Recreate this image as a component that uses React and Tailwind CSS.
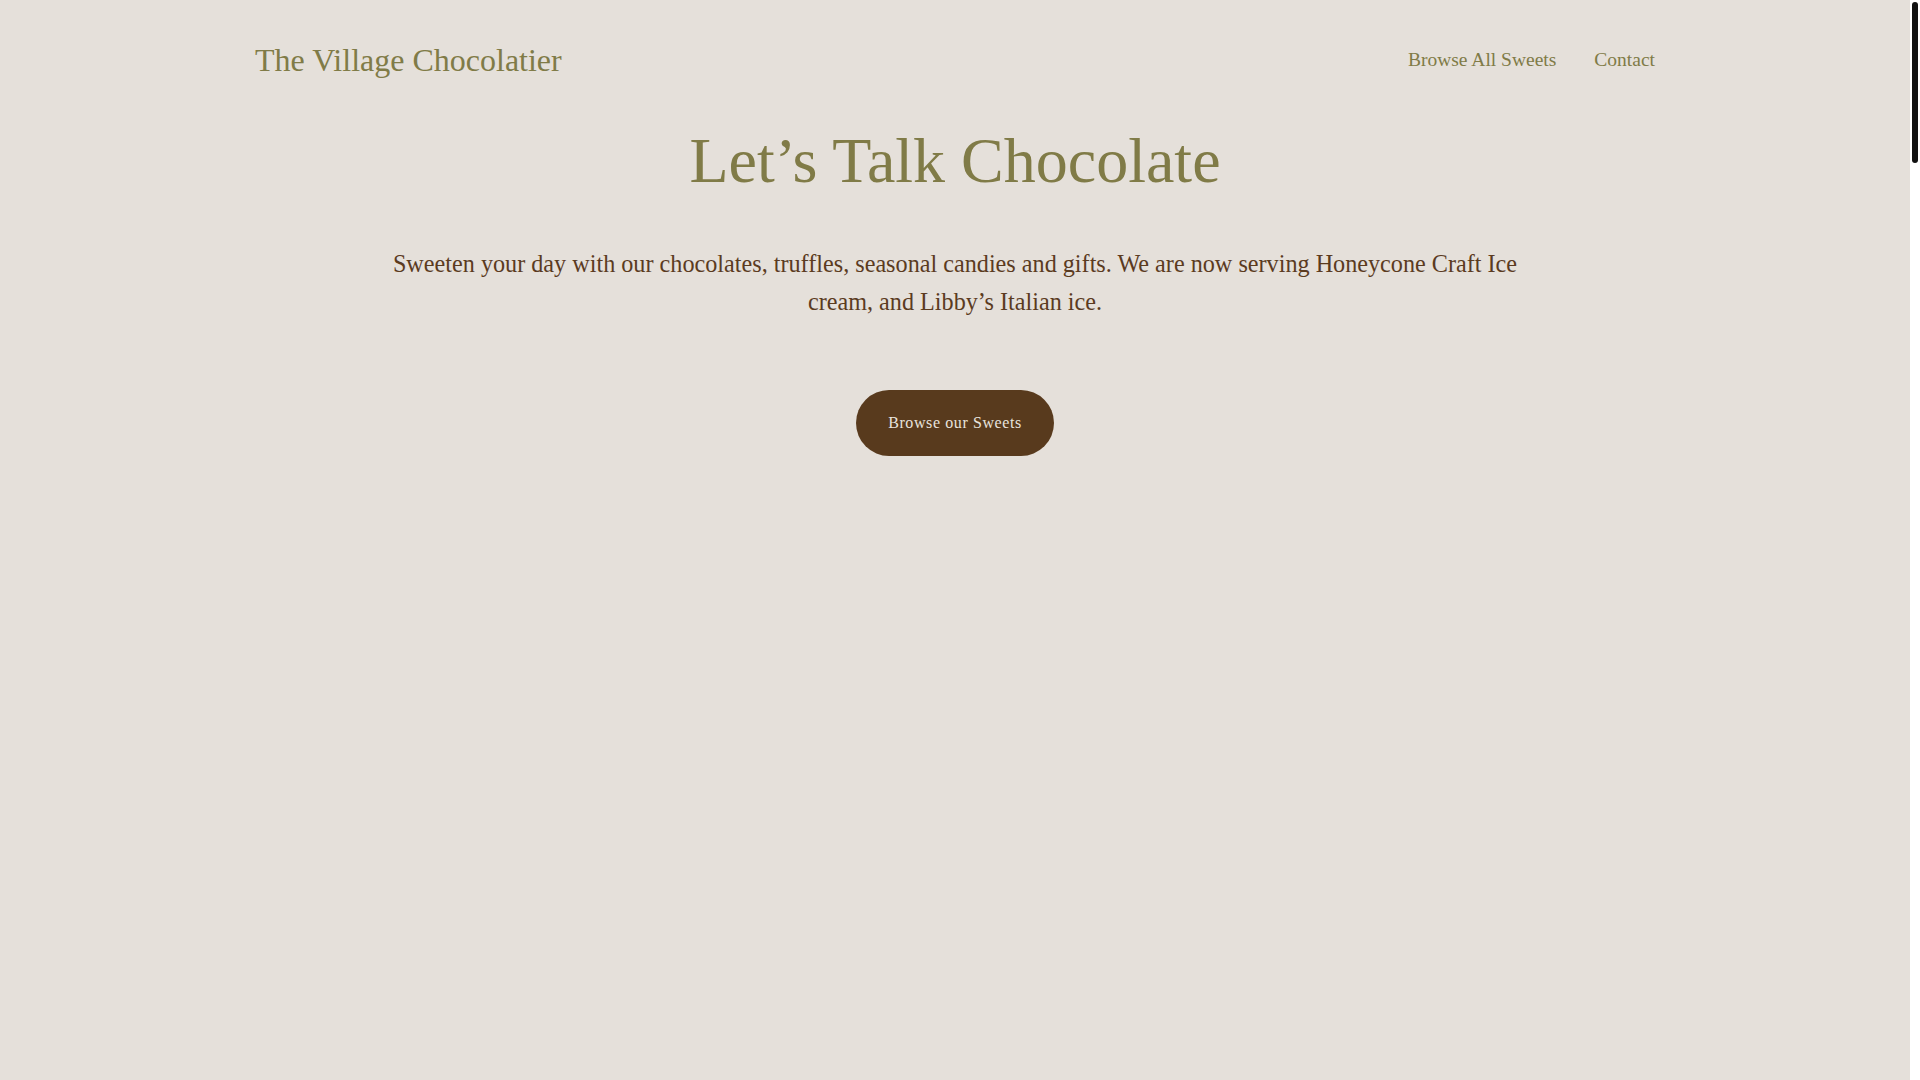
import React from "react";

const serif = { fontFamily: '"Liberation Serif", "Times New Roman", serif' };

const App = () => {
    return (
        <div className="flex h-screen bg-[#e5e0da]" style={serif}>
            <div className="flex-1 overflow-y-auto">
                {/* HEADER */}
                <header className="max-w-[1400px] mx-auto flex items-center justify-between py-[42px]">
                    <a href="#" className="text-[32px] leading-[1.15] text-[#807b47]">
                        The Village Chocolatier
                    </a>
                    <nav className="flex items-center gap-[38px] text-[19.5px] leading-[1.15] text-[#807b47]">
                        <a href="#">Browse All Sweets</a>
                        <a href="#">Contact</a>
                    </nav>
                </header>

                {/* HERO */}
                <section className="text-center px-6">
                    <h1 className="mt-[2px] text-[64px] leading-[1.2] text-[#807b47]">Let’s Talk Chocolate</h1>
                    <p className="mt-[45px] max-w-[1160px] mx-auto text-[24.2px] leading-[38px] text-[#5b3b1f]">
                        Sweeten your day with our chocolates, truffles, seasonal candies and gifts. We are now
                        serving Honeycone Craft Ice cream, and Libby’s Italian ice.
                    </p>
                    <div className="mt-[69px]">
                        <button className="px-[32px] py-[20px] leading-[26px] rounded-full bg-[#583a1d] text-[16px] tracking-[0.6px] text-[#e8e3dd]">
                            Browse our Sweets
                        </button>
                    </div>
                </section>

                {/* REST OF PAGE (images not loaded) */}
                <section className="h-[6610px]" aria-hidden="true"></section>
            </div>

            {/* SCROLLBAR */}
            <aside className="w-[10px] bg-white pt-[2px] pl-[2px]" aria-hidden="true">
                <div className="w-[6px] h-[161px] rounded-full bg-[#111111]"></div>
            </aside>
        </div>
    );
};

export default App;
